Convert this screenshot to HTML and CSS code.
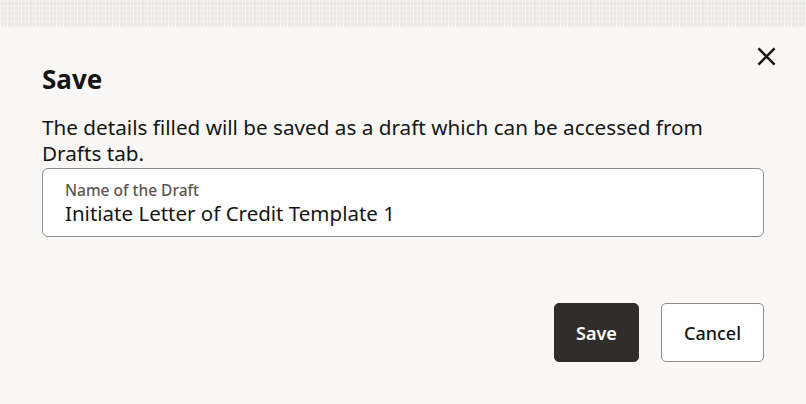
FILE: index.html
```html
<!DOCTYPE html>
<html lang="en">
<head>
<meta charset="utf-8">
<title>Save</title>
<link rel="stylesheet" href="styles.css">
</head>
<body>
<div class="backdrop"></div>
<div class="dialog">
  <div class="header">
    <h1 class="title">Save</h1>
    <button class="close" aria-label="Close">
      <svg width="20" height="20" viewBox="0 0 20 20"><path d="M1.5 1.5 L18.5 18.5 M18.5 1.5 L1.5 18.5" stroke="#161513" stroke-width="2.6" fill="none"/></svg>
    </button>
  </div>
  <p class="message">The details filled will be saved as a draft which can be accessed from Drafts tab.</p>
  <div class="field">
    <div class="field-label">Name of the Draft</div>
    <div class="field-value">Initiate Letter of Credit Template 1</div>
  </div>
  <div class="actions">
    <button class="btn btn-primary">Save</button>
    <button class="btn btn-secondary">Cancel</button>
  </div>
</div>
</body>
</html>
```
FILE: styles.css
```css
* { box-sizing: border-box; }
html, body { margin: 0; padding: 0; }
body {
  background: #f9f8f6;
  font-family: "Noto Sans", "Open Sans", sans-serif;
  color: #161513;
  width: 806px;
  height: 404px;
  overflow: hidden;
}
.backdrop {
  height: 27px;
  background-color: #e9e7e5;
  background-image:
    repeating-linear-gradient(90deg, rgba(255,255,255,0.55) 0 1px, transparent 1px 4px, rgba(255,255,255,0.35) 4px 5px, transparent 5px 7px),
    repeating-linear-gradient(0deg, rgba(255,255,255,0.3) 0 2px, transparent 2px 5px);
}
.dialog {
  padding: 0 42px;
}
.header {
  display: flex;
  justify-content: space-between;
  align-items: flex-start;
  height: 87px;
}
.title {
  margin: 34px 0 0 0;
  font-size: 26px;
  font-weight: 700;
  line-height: 36px;
}
.close {
  margin: 11px -20px 0 0;
  width: 36px;
  height: 36px;
  padding: 0;
  border: none;
  background: transparent;
  display: flex;
  align-items: center;
  justify-content: center;
}
.close svg { width: 19px; height: 19px; }
.message {
  margin: 0;
  font-size: 20.7px;
  line-height: 26px;
  color: #161513;
  width: 700px;
}
.field {
  margin-top: 2px;
  height: 69px;
  background: #fff;
  border: 1px solid #8f8d8b;
  border-radius: 6px;
  padding: 11px 22px 0 22px;
}
.field-label {
  font-size: 15.5px;
  font-weight: 500;
  line-height: 20px;
  color: #5a5856;
}
.field-value {
  font-size: 20.5px;
  line-height: 26px;
  color: #161513;
}
.actions {
  display: flex;
  justify-content: flex-end;
  gap: 22px;
  margin-top: 66px;
}
.btn {
  height: 59px;
  font-family: inherit;
  font-size: 18px;
  font-weight: 600;
  border-radius: 5px;
  padding: 0;
}
.btn-primary {
  width: 85px;
  background: #312d2a;
  color: #fff;
  border: 1px solid #312d2a;
}
.btn-secondary {
  width: 103px;
  background: #fff;
  color: #161513;
  border: 1px solid #8f8d8b;
  font-weight: 500;
}
```
